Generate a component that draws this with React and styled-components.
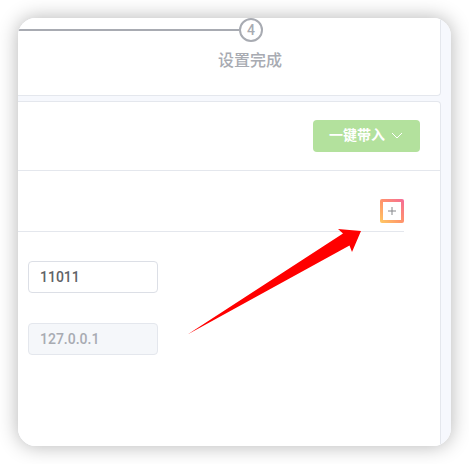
import React from 'react';
import styled, { createGlobalStyle } from 'styled-components';

const GlobalStyle = createGlobalStyle`
  *, *::before, *::after { box-sizing: border-box; }
  body {
    margin: 0;
    background: #fff;
    font-family: Roboto, "Noto Sans CJK SC", sans-serif;
    color: #606266;
  }
`;

const Page = styled.div`
  min-height: 100vh;
  padding: 18px;
  display: flex;
`;

const Frame = styled.main`
  position: relative;
  flex: 1;
  min-width: 0;
  display: flex;
  flex-direction: column;
  gap: 5px;
  padding-right: 10px;
  overflow: hidden;
  border-radius: 18px;
  background: #f6f8fd;
`;

const Shadow = styled.div`
  flex: 1;
  min-width: 0;
  display: flex;
  border-radius: 18px;
  box-shadow: 0 0 20px rgba(0, 0, 0, 0.3);
`;

const Card = styled.section`
  background: #fff;
  border: 1px solid #e4e7ed;
  border-left: 0;
`;

const StepsCard = styled(Card)`
  border-top: 0;
  border-radius: 0 0 4px 0;
  padding-bottom: 22px;
`;

const FormCard = styled(Card)`
  flex: 1;
  border-bottom: 0;
  border-radius: 0 4px 0 0;
`;

const Step = styled.div`
  width: 264px;
  display: flex;
  flex-direction: column;
  color: #a8abb2;
`;

const StepTrack = styled.div`
  display: flex;
  align-items: center;
  width: 245px;
`;

const StepLine = styled.div`
  flex: 1;
  height: 2px;
  background: #a8abb2;
`;

const StepNumber = styled.div`
  width: 24px;
  height: 24px;
  border: 2px solid #a8abb2;
  border-radius: 50%;
  display: flex;
  align-items: center;
  justify-content: center;
  font-size: 14px;
  font-weight: 500;
`;

const StepTitle = styled.div`
  align-self: flex-end;
  margin-top: 7px;
  font-size: 16px;
  line-height: 24px;
  font-weight: 500;
`;

const Toolbar = styled.header`
  display: flex;
  justify-content: flex-end;
  padding: 18px 20px;
  border-bottom: 1px solid #e4e7ed;
`;

const ImportButton = styled.button`
  height: 32px;
  padding: 0 16px 2px;
  border: 0;
  border-radius: 4px;
  background: #b3e19d;
  color: #fff;
  display: flex;
  align-items: center;
  gap: 5px;
  font: bold 14px/20px Roboto, "Noto Sans CJK SC", sans-serif;
`;

const GroupHeader = styled.div`
  display: flex;
  justify-content: flex-end;
  margin-right: 36px;
  padding: 28px 0 8px;
  border-bottom: 1px solid #e4e7ed;
`;

const AddButton = styled.button`
  width: 24px;
  height: 24px;
  padding: 0;
  border: 3px solid transparent;
  border-radius: 2px;
  background:
    linear-gradient(#fff, #fff) padding-box,
    linear-gradient(45deg, #ffca62 0%, #ff936b 50%, #f56a99 100%) border-box;
  display: flex;
  align-items: center;
  justify-content: center;
`;

const Fields = styled.form`
  display: flex;
  flex-direction: column;
  gap: 30px;
  width: 140px;
  padding: 29px 0 0 10px;
`;

const Field = styled.input`
  width: 100%;
  height: 32px;
  padding: 0 11px;
  border: 1px solid #dcdfe6;
  border-radius: 4px;
  background: #fff;
  color: #606266;
  font: 500 14px/20px Roboto, sans-serif;

  &:disabled {
    border-color: #e4e7ed;
    background: #f5f7fa;
    color: #a8abb2;
  }
`;

const Pointer = styled.svg`
  position: absolute;
  left: 169px;
  top: 210px;
  pointer-events: none;
`;

export default function App() {
  return (
    <>
      <GlobalStyle />
      <Page>
        <Shadow>
          <Frame>
            <StepsCard>
              <Step>
                <StepTrack>
                  <StepLine />
                  <StepNumber>4</StepNumber>
                </StepTrack>
                <StepTitle>设置完成</StepTitle>
              </Step>
            </StepsCard>
            <FormCard>
              <Toolbar>
                <ImportButton type="button">
                  一键带入
                  <svg width="14" height="14" viewBox="0 0 14 14" fill="none" stroke="#fff" aria-hidden="true">
                    <path d="M2 5l5 5 5-5" />
                  </svg>
                </ImportButton>
              </Toolbar>
              <GroupHeader>
                <AddButton type="button" aria-label="添加">
                  <svg width="10" height="10" viewBox="0 0 10 10" fill="none" stroke="#85878b" aria-hidden="true">
                    <path d="M5 1v8M1 5h8" />
                  </svg>
                </AddButton>
              </GroupHeader>
              <Fields>
                <Field type="text" aria-label="端口" defaultValue="11011" />
                <Field type="text" aria-label="地址" defaultValue="127.0.0.1" disabled />
              </Fields>
            </FormCard>
            <Pointer width="176" height="108" viewBox="0 0 176 108" aria-hidden="true">
              <path
                d="M0.5 106.5L156 5.5L151 1L174 3L165 24L162.500 17.500Z"
                fill="#f00"
              />
            </Pointer>
          </Frame>
        </Shadow>
      </Page>
    </>
  );
}
